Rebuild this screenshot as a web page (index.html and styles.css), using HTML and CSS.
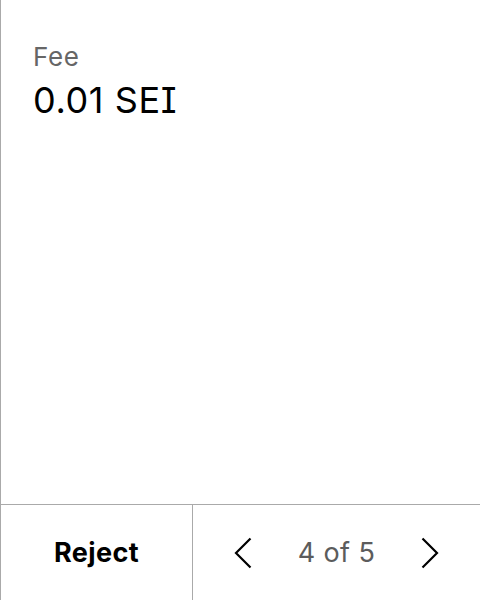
FILE: index.html
```html
<!DOCTYPE html>
<html>
<head>
<meta charset="utf-8">
<link rel="stylesheet" href="styles.css">
</head>
<body>
<div class="page">
  <div class="content">
    <div class="label">Fee</div>
    <div class="value">0.01 SEI</div>
  </div>
  <div class="footer">
    <div class="reject">Reject</div>
    <div class="pager">
      <svg class="chev" width="18" height="32" viewBox="0 0 18 32"><path d="M16.5 1.5 L2 16 L16.5 30.5" fill="none" stroke="#000" stroke-width="2.2"/></svg>
      <span class="count">4 of 5</span>
      <svg class="chev" width="18" height="32" viewBox="0 0 18 32"><path d="M1.5 1.5 L16 16 L1.5 30.5" fill="none" stroke="#000" stroke-width="2.2"/></svg>
    </div>
  </div>
</div>
</body>
</html>
```

FILE: styles.css
```css
* { box-sizing: border-box; }
html, body { margin: 0; padding: 0; background: #fff; }
body {
  font-family: Inter, "Noto Sans", sans-serif;
  font-feature-settings: "cv08" 1;
  color: #000;
}
.page {
  width: 480px;
  height: 600px;
  border-left: 1px solid #aaa;
  display: flex;
  flex-direction: column;
}
.content {
  flex: 1;
  padding: 41px 32px 0 32px;
}
.label {
  font-size: 26px;
  line-height: 1.2;
  letter-spacing: 0.6px;
  color: #666;
}
.value {
  margin-top: 7px;
  font-size: 36px;
  line-height: 1.2;
  letter-spacing: 0.6px;
  color: #000;
}
.footer {
  flex: 0 0 96px;
  border-top: 1px solid #aaa;
  display: flex;
}
.reject {
  width: 191px;
  display: flex;
  align-items: center;
  justify-content: center;
  font-size: 27px;
  font-weight: 700;
  letter-spacing: 0.4px;
}
.pager {
  flex: 1;
  border-left: 1px solid #aaa;
  display: flex;
  align-items: center;
  justify-content: space-between;
  padding: 0 41px 0 41px;
}
.chev { display: block; }
.count {
  font-size: 27px;
  letter-spacing: 0.4px;
  color: #5c5c5c;
}
```
